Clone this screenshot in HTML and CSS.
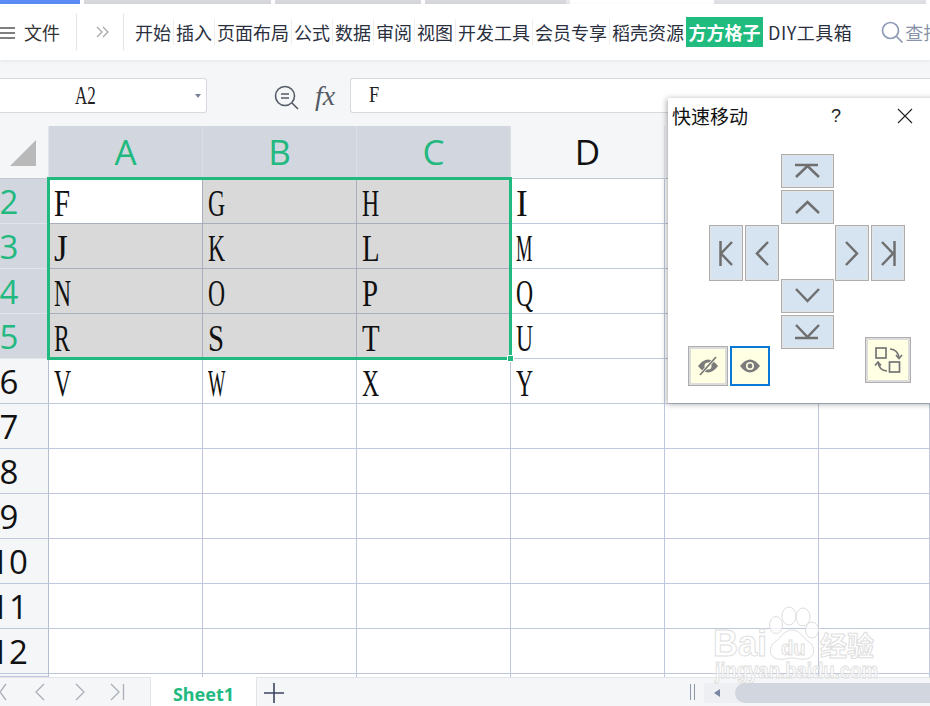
FILE: index.html
```html
<!DOCTYPE html>
<html lang="zh-CN">
<head>
<meta charset="utf-8">
<title>快速移动</title>
<link rel="stylesheet" href="styles.css">
</head>
<body>
<div class="app">
  <div class="winstrip">
    <i class="s s-blue"></i><i class="s s-a"></i><i class="s s-b"></i><i class="s s-c"></i><i class="s s-white"></i><i class="s s-d"></i>
  </div>
  <header class="toolbar">
    <svg class="burger" width="15" height="12" viewBox="0 0 15 12"><path d="M0 1h15M0 6h15M0 11h15" stroke="#555" stroke-width="1.6" fill="none"/></svg>
    <span class="file">文件</span>
    <i class="vdiv first"></i>
    <svg class="more" width="13" height="12" viewBox="0 0 13 12"><path d="M1 1l5 5-5 5M7 1l5 5-5 5" stroke="#a8a8a8" stroke-width="1.3" fill="none"/></svg>
    <i class="vdiv second"></i>
    <nav class="tabs">
      <span class="tab">开始</span><span class="tab">插入</span><span class="tab">页面布局</span><span class="tab">公式</span><span class="tab">数据</span><span class="tab">审阅</span><span class="tab">视图</span><span class="tab">开发工具</span><span class="tab">会员专享</span><span class="tab plain">稻壳资源</span><span class="tab-hot">方方格子</span><span class="tab plain diy">DIY工具箱</span>
    </nav>
    <svg class="search" width="23" height="23" viewBox="0 0 23 23"><circle cx="9.5" cy="9.5" r="8" stroke="#8d9ab5" stroke-width="1.7" fill="none"/><path d="M15.5 15.5l6 6" stroke="#8d9ab5" stroke-width="1.7"/></svg>
    <span class="search-text">查找</span>
  </header>

  <section class="fbar">
    <div class="namebox"><span class="narrow a2">A2</span><i class="caret"></i></div>
    <svg class="zoomi" width="25" height="25" viewBox="0 0 25 25"><circle cx="11" cy="11" r="9.5" stroke="#555b66" stroke-width="1.6" fill="none"/><path d="M7 9h8M7 13h8M18 18l6 6" stroke="#555b66" stroke-width="1.6" fill="none"/></svg>
    <span class="fx">fx</span>
    <div class="finput"><span class="narrow fval">F</span></div>
  </section>

  <main class="sheet">
    <div class="grid">
      <div class="corner"><svg width="26" height="26" viewBox="0 0 26 26"><path d="M26 0V26H0Z" fill="#b9b9b9"/></svg></div>
      <div class="ch on">A</div><div class="ch on">B</div><div class="ch on">C</div><div class="ch">D</div><div class="ch"></div><div class="ch"></div>

      <div class="rh on"><span>2</span></div><div class="c active"><span class="g-mid">F</span></div><div class="c sel"><span>G</span></div><div class="c sel"><span>H</span></div><div class="c"><span class="g-thin">I</span></div><div class="c"></div><div class="c"></div>
      <div class="rh on"><span>3</span></div><div class="c sel"><span class="g-thin">J</span></div><div class="c sel"><span>K</span></div><div class="c sel"><span class="g-mid">L</span></div><div class="c"><span class="g-wide">M</span></div><div class="c"></div><div class="c"></div>
      <div class="rh on"><span>4</span></div><div class="c sel"><span>N</span></div><div class="c sel"><span>O</span></div><div class="c sel"><span class="g-mid">P</span></div><div class="c"><span>Q</span></div><div class="c"></div><div class="c"></div>
      <div class="rh on"><span>5</span></div><div class="c sel"><span>R</span></div><div class="c sel"><span class="g-mid">S</span></div><div class="c sel"><span class="g-mid">T</span></div><div class="c"><span>U</span></div><div class="c"></div><div class="c"></div>
      <div class="rh"><span>6</span></div><div class="c"><span>V</span></div><div class="c"><span class="g-wide">W</span></div><div class="c"><span>X</span></div><div class="c"><span>Y</span></div><div class="c"></div><div class="c"></div>
      <div class="rh"><span>7</span></div><div class="c"></div><div class="c"></div><div class="c"></div><div class="c"></div><div class="c"></div><div class="c"></div>
      <div class="rh"><span>8</span></div><div class="c"></div><div class="c"></div><div class="c"></div><div class="c"></div><div class="c"></div><div class="c"></div>
      <div class="rh"><span>9</span></div><div class="c"></div><div class="c"></div><div class="c"></div><div class="c"></div><div class="c"></div><div class="c"></div>
      <div class="rh"><span>10</span></div><div class="c"></div><div class="c"></div><div class="c"></div><div class="c"></div><div class="c"></div><div class="c"></div>
      <div class="rh"><span>11</span></div><div class="c"></div><div class="c"></div><div class="c"></div><div class="c"></div><div class="c"></div><div class="c"></div>
      <div class="rh"><span>12</span></div><div class="c"></div><div class="c"></div><div class="c"></div><div class="c"></div><div class="c"></div><div class="c"></div>
      <div class="rh"></div><div class="c"></div><div class="c"></div><div class="c"></div><div class="c"></div><div class="c"></div><div class="c"></div>
    </div>
    <div class="selection"><i class="handle"></i></div>
  </main>

  <footer class="tabbar">
    <svg class="sheetnav" width="126" height="18" viewBox="0 0 126 18"><path d="M6 1L0 9l6 8M44 1l-8 8 8 8M76 1l8 8-8 8M111 1l8 8-8 8M123.500 1v16" stroke="#a9aeb8" stroke-width="1.300" fill="none"/></svg>
    <div class="sheettab">Sheet1</div>
    <svg class="plus" width="20" height="20" viewBox="0 0 20 20"><path d="M0 10h20M10 0v20" stroke="#3d4560" stroke-width="1.600"/></svg>
    <div class="hscroll-zone">
      <svg class="split" width="5" height="16" viewBox="0 0 5 16"><path d="M.5 0v16M4.500 0v16" stroke="#8d96ab" stroke-width="1"/></svg>
      <div class="hscroll">
        <i class="harrow"></i>
        <i class="hthumb"></i>
      </div>
    </div>
  </footer>

  <aside class="dialog">
    <div class="dlg-title">
      <span class="dlg-name">快速移动</span>
      <span class="dlg-help">?</span>
      <svg class="dlg-close" width="16" height="16" viewBox="0 0 16 16"><path d="M1 1l14 14M15 1L1 15" stroke="#222" stroke-width="1.100"/></svg>
    </div>
    <div class="pad">
      <button class="btn side"><svg width="34" height="56" viewBox="0 0 34 56"><path d="M11.500 16v25M23 17L12 28.500 23 40" class="ic"/></svg></button>
      <button class="btn side"><svg width="34" height="56" viewBox="0 0 34 56"><path d="M23 17L12 28.500 23 40" class="ic"/></svg></button>
      <div class="mid">
        <div class="mid-group">
          <button class="btn wide"><svg width="53" height="34" viewBox="0 0 53 34"><path d="M14 11h23M15 23l11.500-11L38 23" class="ic"/></svg></button>
          <button class="btn wide"><svg width="53" height="34" viewBox="0 0 53 34"><path d="M15 23l11.500-11L38 23" class="ic"/></svg></button>
        </div>
        <div class="mid-group">
          <button class="btn wide"><svg width="53" height="34" viewBox="0 0 53 34"><path d="M15 10l11.500 12L38 10" class="ic"/></svg></button>
          <button class="btn wide"><svg width="53" height="34" viewBox="0 0 53 34"><path d="M14 23h23M15 10l11.500 12L38 10" class="ic"/></svg></button>
        </div>
      </div>
      <button class="btn side"><svg width="34" height="56" viewBox="0 0 34 56"><path d="M11 17l11 11.500L11 40" class="ic"/></svg></button>
      <button class="btn side"><svg width="34" height="56" viewBox="0 0 34 56"><path d="M23.500 16v25M11 17l11 11.500L11 40" class="ic"/></svg></button>
    </div>
    <div class="dlg-foot">
      <div class="eyes">
        <button class="btn yellow eye"><svg width="38" height="38" viewBox="0 0 38 38"><path d="M9 19q10-13 20 0q-10 13-20 0Z" fill="#7b7b7b"/><circle cx="19" cy="19" r="3.500" fill="#ffffe3"/><path d="M11 28L27 10" stroke="#ffffe3" stroke-width="3"/><path d="M11 28L27 10" stroke="#7b7b7b" stroke-width="1.800"/></svg></button>
        <button class="btn yellow eye focus"><svg width="36" height="36" viewBox="0 0 36 36"><path d="M8 18q10-13 20 0q-10 13-20 0Z" fill="#7b7b7b"/><circle cx="18" cy="18" r="4" fill="#ffffe3"/><circle cx="18" cy="18" r="2.400" fill="#7b7b7b"/></svg></button>
      </div>
      <button class="btn yellow swap"><svg width="46" height="46" viewBox="0 0 46 46"><g class="ic2"><rect x="11" y="11" width="10" height="10"/><rect x="24.500" y="25" width="10" height="10"/><path d="M25 12q8 .5 9 9M22 34q-8-.500-9-9"/><path d="M31 18l3 3.500 3-3.500M10 28.500l3-3.500 3 3.500"/></g></svg></button>
    </div>
  </aside>

  <svg class="watermark" width="182" height="90" viewBox="0 0 182 90">
    <g class="wm-shape">
      <ellipse cx="76" cy="25" rx="6.500" ry="8.500"/>
      <ellipse cx="89" cy="16" rx="7" ry="9"/>
      <ellipse cx="103" cy="17" rx="7" ry="9"/>
      <ellipse cx="112" cy="30" rx="6.500" ry="8"/>
      <path d="M92 30c8 0 11 8 17 12 7 5 6 16-3 17-6 1-9-1-14-1s-8 2-14 1c-9-1-10-12-3-17 6-4 9-12 17-12Z"/>
      <text x="13" y="56" font-size="36" textLength="54" lengthAdjust="spacingAndGlyphs" class="wm-latin">Bai</text>
      <text x="81" y="55" font-size="20" class="wm-latin">du</text>
      <text x="120" y="56" font-size="27" class="wm-cjk">经验</text>
      <text x="15" y="78" font-size="22" textLength="163" lengthAdjust="spacingAndGlyphs" class="wm-latin">jingyan.baidu.com</text>
    </g>
  </svg>
</div>
</body>
</html>
```

FILE: styles.css
```css
* { box-sizing: border-box; }
html, body { margin: 0; padding: 0; }
body { font-family: "Noto Sans CJK SC", "Noto Sans", sans-serif; background: #fff; }
.app { position: relative; width: 930px; height: 706px; overflow: hidden; display: flex; flex-direction: column; }

.winstrip { height: 4px; display: flex; background: #fff; flex: none; }
.s { display: block; height: 4px; flex: none; }
.s-blue { width: 80px; background: #5b8cf5; margin-right: 4px; }
.s-a { width: 187px; background: #d7d8dc; margin-right: 4px; }
.s-b { width: 146px; background: #d7d8dc; margin-right: 4px; }
.s-c { width: 145px; background: #d7d8dc; border-right: 4px solid #e9e9ec; }
.s-white { width: 144px; background: #fff; }
.s-d { width: 212px; background: #e0e1e5; }

.toolbar { height: 56px; flex: none; display: flex; align-items: center; background: #fff; box-shadow: 0 1px 3px rgba(0,0,0,.08); position: relative; z-index: 2; overflow: hidden; color: #2b3040; font-size: 18px; line-height: 26px; white-space: nowrap; }
.burger { flex: none; margin-top: 1px; }
.file { margin-left: 9px; width: 36px; color: #333; }
.vdiv { width: 1px; height: 36px; background: #e3e3e3; flex: none; }
.vdiv.first { margin-left: 16px; }
.more { margin-left: 19px; flex: none; margin-top: -1px; }
.vdiv.second { margin-left: 14px; }
.tabs { display: flex; align-items: center; margin-left: 11px; flex: none; }
.tab { padding-right: 2px; margin-right: 2px; border-right: 1px solid #efefef; line-height: 26px; }
.tab.plain { border-right: 0; margin-right: 0; }
.tab-hot { width: 77px; height: 30px; background: #20bb7e; color: #fff; font-weight: 700; text-align: center; line-height: 30px; }
.diy { margin-left: 5px; padding: 0; letter-spacing: .5px; }
.search { margin-left: 29px; flex: none; }
.search-text { margin-left: 1px; color: #8a93a8; }

.fbar { height: 66px; flex: none; background: #f5f6f8; display: flex; align-items: flex-start; padding-top: 18px; }
.namebox { width: 207px; height: 35px; background: #fff; border: 1px solid #d6d9df; border-left: 0; border-radius: 0 3px 3px 0; display: flex; align-items: center; position: relative; }
.narrow { font-family: "Liberation Serif", serif; color: #222; display: inline-block; transform-origin: left center; }
.a2 { font-size: 25px; margin-left: 75px; line-height: 35px; transform: scaleX(.68); }
.caret { position: absolute; left: 195px; top: 15px; width: 0; height: 0; border-left: 3.500px solid transparent; border-right: 3.500px solid transparent; border-top: 4px solid #7a8299; }
.zoomi { margin-left: 67px; margin-top: 7px; flex: none; }
.fx { font-family: "Liberation Serif", serif; font-style: italic; font-size: 28px; line-height: 35px; color: #555b66; margin-left: 16px; width: 35px; }
.finput { flex: 1; height: 35px; background: #fff; border: 1px solid #d6d9df; border-right: 0; border-radius: 3px 0 0 3px; padding-left: 18px; line-height: 31px; }
.fval { font-size: 23px; transform: scaleX(.8); }

.sheet { position: relative; height: 551px; flex: none; overflow: hidden; background: #fff; }
.grid { display: grid; grid-template-columns: 49px repeat(5, 154px) 111px; grid-template-rows: 53px repeat(11, 45px) 3px; }
.corner { background: #f5f6f8; border-right: 1px solid #e3e6ec; border-bottom: 1px solid #c3c8d4; display: flex; padding: 14px 0 0 10px; }
.ch { background: #f5f6f8; font-family: "Open Sans", sans-serif; font-size: 35px; line-height: 51px; text-align: center; color: #111; border-right: 1px solid #e3e6ec; border-bottom: 1px solid #c3c8d4; }
.ch.on { background: #d2d6df; color: #22b97f; border-right-color: #dcdfe6; }
.rh { background: #f5f6f8; border-right: 1px solid #b5bdd0; border-bottom: 1px solid #bfc7dc; display: flex; justify-content: flex-start; align-items: center; font-family: "Open Sans", sans-serif; font-size: 33px; color: #111; }
.rh span { width: 18px; display: flex; justify-content: center; }
.rh.on { background: #d2d6df; color: #22b97f; border-bottom-color: #e1e4ea; }
.c { border-right: 1px solid #bfc7dc; border-bottom: 1px solid #bfc7dc; padding: 5px 0 0 5px; display: flex; align-items: center; font-family: "Liberation Serif", serif; font-size: 37px; color: #111; background: #fff; }
.c span { display: inline-block; transform-origin: left center; transform: scaleX(.64); line-height: 40px; }
.c span.g-mid { transform: scaleX(.78); }
.c span.g-wide { transform: scaleX(.5); }
.c span.g-thin { transform: scaleX(.95); }
.c.sel { background: #d9d9d9; border-color: #a9afbe; }
.c.active { background: #fff; border-right-color: #a9afbe; border-bottom-color: #a9afbe; }

.selection { position: absolute; left: 47px; top: 51px; width: 465px; height: 183px; border: 3px solid #20b97f; pointer-events: none; }
.handle { position: absolute; right: -5px; bottom: -5px; width: 7px; height: 7px; background: #20b97f; border: 1px solid #fff; }

.tabbar { height: 29px; flex: none; background: #f5f6f8; border-top: 1px solid #e2e4ea; display: flex; align-items: center; position: relative; }
.sheetnav { flex: none; width: 126px; margin-right: 24px; }
.sheettab { width: 107px; height: 29px; background: #fff; border-left: 1px solid #e2e4ea; border-right: 1px solid #e2e4ea; color: #22b97f; font-family: "Noto Sans", sans-serif; font-weight: 700; font-size: 18px; line-height: 35px; text-align: center; margin-top: -1px; flex: none; }
.plus { margin-left: 7px; flex: none; margin-top: 1px; }
.hscroll-zone { margin-left: auto; display: flex; align-items: center; }
.split { margin-right: 9px; flex: none; }
.hscroll { width: 226px; height: 20px; background: #edeff3; display: flex; align-items: center; margin-top: 1px; }
.harrow { width: 0; height: 0; margin-left: 10px; border-top: 4px solid transparent; border-bottom: 4px solid transparent; border-right: 6px solid #7a86a3; }
.hthumb { width: 210px; height: 20px; background: #d2d6df; border-radius: 10px 0 0 10px; margin-left: 15px; flex: none; }

.dialog { position: absolute; left: 668px; top: 98px; width: 280px; height: 305px; background: #fff; box-shadow: -1px 1px 6px rgba(0,0,0,.35); z-index: 3; }
.dlg-title { height: 36px; display: flex; align-items: center; font-size: 19px; color: #111; }
.dlg-name { margin-left: 4px; width: 160px; line-height: 34px; }
.dlg-help { width: 8px; font-family: "Liberation Sans", sans-serif; font-size: 18px; color: #222; margin-left: -1px; }
.dlg-close { margin-left: 58px; flex: none; }

.pad { display: flex; gap: 2px; margin: 20px 0 0 41px; height: 195px; align-items: flex-start; width: 196px; }
.btn { appearance: none; margin: 0; padding: 0; border: 1px solid #adadad; background: #d6e3f0; box-shadow: inset 0 0 0 1px #e3e3e3; display: flex; align-items: center; justify-content: center; flex: none; overflow: hidden; }
.btn svg { display: block; flex: none; }
.side { width: 34px; height: 56px; margin-top: 71px; }
.mid { width: 52px; height: 195px; display: flex; flex-direction: column; justify-content: space-between; flex: none; }
.mid-group { display: flex; flex-direction: column; gap: 2px; }
.wide { width: 53px; height: 34px; }
.ic { fill: none; stroke: #6f6f6f; stroke-width: 2.500; }
.ic2 { fill: none; stroke: #757575; stroke-width: 1.700; }

.dlg-foot { display: flex; align-items: flex-start; margin: -12px 0 0 20px; }
.eyes { display: flex; gap: 2px; margin-top: 9px; }
.yellow { background: #ffffe3; box-shadow: inset 0 0 0 2px #dcdcdc; }
.eye { width: 40px; height: 40px; }
.eye.focus { border: 2px solid #0a78d7; box-shadow: none; }
.swap { width: 46px; height: 46px; margin-left: 95px; }

.watermark { position: absolute; left: 700px; top: 600px; z-index: 4; pointer-events: none; }
.wm-shape { fill: rgba(255,255,255,.7); stroke: #dedede; stroke-width: 1; }
.wm-latin { font-family: "Liberation Sans", sans-serif; font-weight: 700; }
.wm-cjk { font-family: "Noto Sans CJK SC", sans-serif; font-weight: 700; }
```
